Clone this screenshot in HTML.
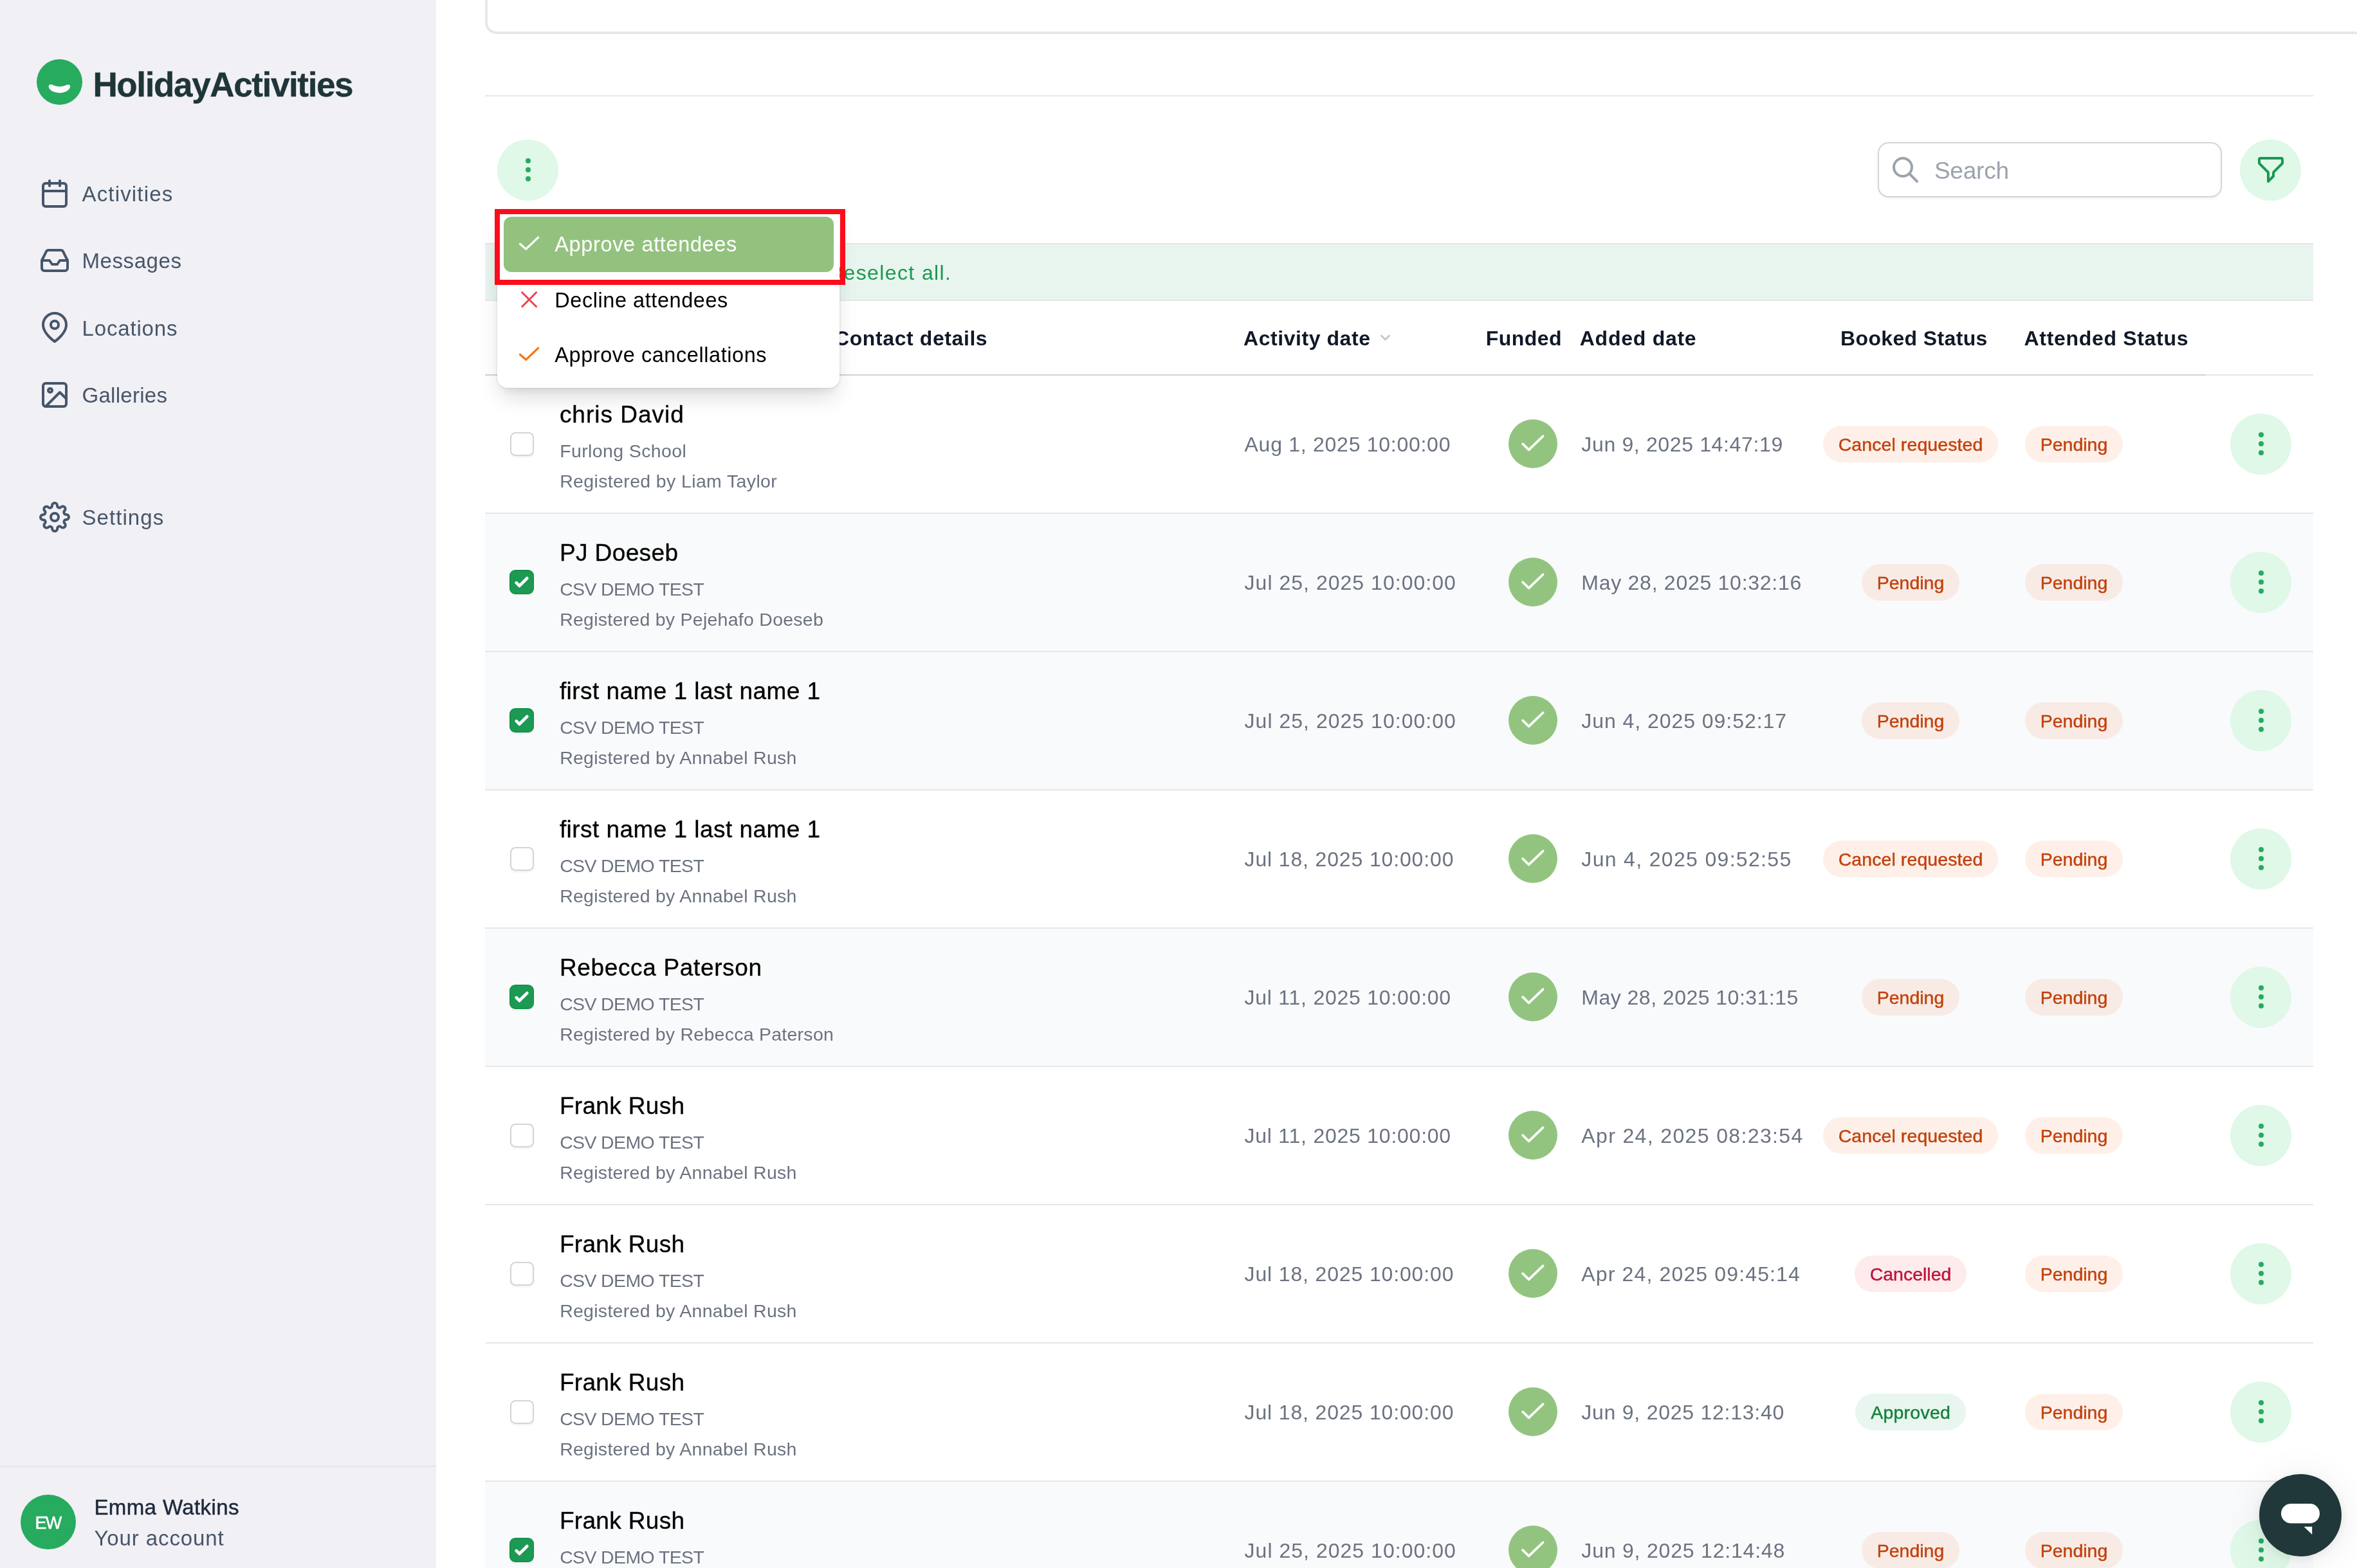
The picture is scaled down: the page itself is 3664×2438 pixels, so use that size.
<!DOCTYPE html>
<html lang="en"><head><meta charset="utf-8"><title>HolidayActivities - Attendees</title>
<style>
html,body{margin:0;padding:0;background:#fff;}
body{width:3664px;height:2438px;position:relative;overflow:hidden;font-family:"Liberation Sans", sans-serif;}
.L{position:absolute;left:0;top:0;width:3664px;height:2438px;overflow:hidden;}
.G{will-change:transform;}
.a{position:absolute;display:block;}
.t{position:absolute;white-space:pre;}
</style></head><body>
<div class="L">
<div class="a" style="left:0px;top:0px;width:678px;height:2438px;background:#f1f0f5;"></div>
<div class="a" style="left:57px;top:92px;width:71px;height:71px;background:#27ab5f;border-radius:36px;"></div>
<svg class="a" style="left:57px;top:92px;" width="71" height="71" viewBox="0 0 71 71" fill="none"><path d="M18.6 42.6 C18.6 39.2 22.4 38.6 25.5 40.2 C31.8 43.4 39.6 43.4 46 40.2 C49 38.6 52.6 39.4 52.2 42.8 C51.4 48.4 44 52.4 35.4 52.4 C26.8 52.4 19.2 48.4 18.6 42.6 Z" fill="#fff"/></svg>
<svg class="a" style="left:60.5px;top:276.5px;" width="48" height="48" viewBox="0 0 24 24" fill="none" stroke="#46566a" stroke-width="2" stroke-linecap="round" stroke-linejoin="round"><rect x="3" y="4" width="18" height="18" rx="2" ry="2"/><line x1="16" y1="2" x2="16" y2="6"/><line x1="8" y1="2" x2="8" y2="6"/><line x1="3" y1="10" x2="21" y2="10"/></svg>
<svg class="a" style="left:60.5px;top:380.79999999999995px;" width="48" height="48" viewBox="0 0 24 24" fill="none" stroke="#46566a" stroke-width="2" stroke-linecap="round" stroke-linejoin="round"><polyline points="22 12 16 12 14 15 10 15 8 12 2 12"/><path d="M5.45 5.11L2 12v6a2 2 0 0 0 2 2h16a2 2 0 0 0 2-2v-6l-3.45-6.89A2 2 0 0 0 16.76 4H7.24a2 2 0 0 0-1.79 1.11z"/></svg>
<svg class="a" style="left:60.5px;top:485.0px;" width="48" height="48" viewBox="0 0 24 24" fill="none" stroke="#46566a" stroke-width="2" stroke-linecap="round" stroke-linejoin="round"><path d="M21 10c0 7-9 13-9 13s-9-6-9-13a9 9 0 0 1 18 0z"/><circle cx="12" cy="10" r="3"/></svg>
<svg class="a" style="left:60.5px;top:589.8px;" width="48" height="48" viewBox="0 0 24 24" fill="none" stroke="#46566a" stroke-width="2" stroke-linecap="round" stroke-linejoin="round"><rect x="3" y="3" width="18" height="18" rx="2" ry="2"/><circle cx="8.5" cy="8.5" r="1.5"/><polyline points="21 15 16 10 5 21"/></svg>
<svg class="a" style="left:60.5px;top:780.0999999999999px;" width="48" height="48" viewBox="0 0 24 24" fill="none" stroke="#46566a" stroke-width="2" stroke-linecap="round" stroke-linejoin="round"><circle cx="12" cy="12" r="3"/><path d="M19.4 15a1.65 1.65 0 0 0 .33 1.82l.06.06a2 2 0 0 1 0 2.83 2 2 0 0 1-2.83 0l-.06-.06a1.65 1.65 0 0 0-1.82-.33 1.65 1.65 0 0 0-1 1.51V21a2 2 0 0 1-2 2 2 2 0 0 1-2-2v-.09A1.65 1.65 0 0 0 9 19.4a1.65 1.65 0 0 0-1.82.33l-.06.06a2 2 0 0 1-2.83 0 2 2 0 0 1 0-2.83l.06-.06a1.65 1.65 0 0 0 .33-1.82 1.65 1.65 0 0 0-1.51-1H3a2 2 0 0 1-2-2 2 2 0 0 1 2-2h.09A1.65 1.65 0 0 0 4.6 9a1.65 1.65 0 0 0-.33-1.82l-.06-.06a2 2 0 0 1 0-2.83 2 2 0 0 1 2.83 0l.06.06a1.65 1.65 0 0 0 1.82.33H9a1.65 1.65 0 0 0 1-1.51V3a2 2 0 0 1 2-2 2 2 0 0 1 2 2v.09a1.65 1.65 0 0 0 1 1.51 1.65 1.65 0 0 0 1.82-.33l.06-.06a2 2 0 0 1 2.83 0 2 2 0 0 1 0 2.83l-.06.06a1.65 1.65 0 0 0-.33 1.82V9a1.65 1.65 0 0 0 1.51 1H21a2 2 0 0 1 2 2 2 2 0 0 1-2 2h-.09a1.65 1.65 0 0 0-1.51 1z"/></svg>
<div class="a" style="left:0px;top:2279px;width:678px;height:2px;background:#e4e5ea;"></div>
<div class="a" style="left:32px;top:2324px;width:86px;height:85px;background:#27ab5f;border-radius:43px;"></div>
<div class="a" style="left:754px;top:-40px;width:3000px;height:93px;border-radius:18px;border:4px solid #e5e7eb;box-sizing:border-box;"></div>
<div class="a" style="left:754px;top:148px;width:2842px;height:2px;background:#e5e7eb;"></div>
<div class="a" style="left:2919px;top:221px;width:535px;height:86px;background:#fff;border-radius:17px;border:2px solid #d1d5db;box-sizing:border-box;box-shadow:0 2px 4px rgba(0,0,0,.05);"></div>
<svg class="a" style="left:2937.7px;top:239.6px;" width="48" height="48" viewBox="0 0 24 24" fill="none" stroke="#9ca3af" stroke-width="2" stroke-linecap="round" stroke-linejoin="round"><path d="M21 21l-6-6m2-5a7 7 0 11-14 0 7 7 0 0114 0z"/></svg>
<div class="a" style="left:3482px;top:217px;width:95px;height:95px;background:#dff8e8;border-radius:48px;"></div>
<svg class="a" style="left:3506px;top:240px;" width="48" height="48" viewBox="0 0 24 24" fill="none" stroke="#1a9850" stroke-width="2" stroke-linecap="round" stroke-linejoin="round"><path d="M3 4a1 1 0 011-1h16a1 1 0 011 1v2.586a1 1 0 01-.293.707l-6.414 6.414a1 1 0 00-.293.707V17l-4 4v-6.586a1 1 0 00-.293-.707L3.293 7.293A1 1 0 013 6.586V4z"/></svg>
<div class="a" style="left:773.0px;top:217.0px;width:95px;height:95px;background:#dff8e8;border-radius:48px;"></div>
<svg class="a" style="left:796.8px;top:239.8px;" width="48" height="48" viewBox="0 0 24 24" fill="#27ab5f"><circle cx="12" cy="5" r="2"/><circle cx="12" cy="12" r="2"/><circle cx="12" cy="19" r="2"/></svg>
<div class="a" style="left:754px;top:378px;width:2842px;height:2px;background:#e5e7eb;"></div>
<div class="a" style="left:754px;top:380px;width:2842px;height:86px;background:#e8f5ee;"></div>
<div class="a" style="left:754px;top:466px;width:2842px;height:2px;background:#e5e7eb;"></div>
<div class="a" style="left:793px;top:506px;width:36px;height:36px;background:#fff;border-radius:8px;border:2px solid #d1d5db;box-sizing:border-box;"></div>
<svg class="a" style="left:2142.9px;top:514px;" width="21" height="21" viewBox="0 0 24 24" fill="none" stroke="#c3c6cc" stroke-width="3.2" stroke-linecap="round" stroke-linejoin="round"><path d="M19 9l-7 7-7-7"/></svg>
<div class="a" style="left:754px;top:582px;width:2675px;height:2px;background:#cdd3da;"></div>
<div class="a" style="left:3429px;top:582px;width:167px;height:2px;background:#e5e7eb;"></div>
<div class="a" style="left:754px;top:797px;width:2842px;height:2px;background:#e5e7eb;"></div>
<div class="a" style="left:792.5px;top:671.5px;width:37px;height:37px;background:#fff;border-radius:8.5px;border:2px solid #d1d5db;box-sizing:border-box;box-shadow:0 2px 3px rgba(0,0,0,.06);"></div>
<div class="a" style="left:2345px;top:652.0px;width:76px;height:76px;background:#93c47f;border-radius:38px;"></div>
<svg class="a" style="left:2345px;top:652.0px;" width="76" height="76" viewBox="0 0 76 76" fill="none" stroke="#fff" stroke-width="3.6" stroke-linecap="round" stroke-linejoin="round"><polyline points="22.1,38.1 31.6,47.4 53.7,26.1"/></svg>
<div class="a" style="left:2834.0px;top:662.0px;width:272px;height:57px;background:rgba(245,105,35,.1);border-radius:28.5px;"></div>
<div class="a" style="left:3148px;top:662.0px;width:152px;height:57px;background:rgba(245,105,35,.1);border-radius:28.5px;"></div>
<div class="a" style="left:3467.0px;top:642.9px;width:95px;height:95px;background:#dff8e8;border-radius:48px;"></div>
<svg class="a" style="left:3490.8px;top:665.6999999999999px;" width="48" height="48" viewBox="0 0 24 24" fill="#27ab5f"><circle cx="12" cy="5" r="2"/><circle cx="12" cy="12" r="2"/><circle cx="12" cy="19" r="2"/></svg>
<div class="a" style="left:754px;top:799px;width:2842px;height:213px;background:#f9fafb;"></div>
<div class="a" style="left:754px;top:1012px;width:2842px;height:2px;background:#e5e7eb;"></div>
<div class="a" style="left:792px;top:886.0px;width:38px;height:38px;background:#1c9a54;border-radius:9px;border:2px solid #15924a;box-sizing:border-box;box-shadow:0 2px 3px rgba(0,0,0,.06);"></div>
<svg class="a" style="left:792px;top:886.0px;" width="38" height="38" viewBox="0 0 16 16" fill="none"><path fill="#fff" d="M12.207 4.793a1 1 0 010 1.414l-5 5a1 1 0 01-1.414 0l-2-2a1 1 0 011.414-1.414L6.5 9.086l4.293-4.293a1 1 0 011.414 0z"/></svg>
<div class="a" style="left:2345px;top:867.0px;width:76px;height:76px;background:#93c47f;border-radius:38px;"></div>
<svg class="a" style="left:2345px;top:867.0px;" width="76" height="76" viewBox="0 0 76 76" fill="none" stroke="#fff" stroke-width="3.6" stroke-linecap="round" stroke-linejoin="round"><polyline points="22.1,38.1 31.6,47.4 53.7,26.1"/></svg>
<div class="a" style="left:2894.0px;top:877.0px;width:152px;height:57px;background:rgba(245,105,35,.1);border-radius:28.5px;"></div>
<div class="a" style="left:3148px;top:877.0px;width:152px;height:57px;background:rgba(245,105,35,.1);border-radius:28.5px;"></div>
<div class="a" style="left:3467.0px;top:857.9px;width:95px;height:95px;background:#dff8e8;border-radius:48px;"></div>
<svg class="a" style="left:3490.8px;top:880.6999999999999px;" width="48" height="48" viewBox="0 0 24 24" fill="#27ab5f"><circle cx="12" cy="5" r="2"/><circle cx="12" cy="12" r="2"/><circle cx="12" cy="19" r="2"/></svg>
<div class="a" style="left:754px;top:1014px;width:2842px;height:213px;background:#f9fafb;"></div>
<div class="a" style="left:754px;top:1227px;width:2842px;height:2px;background:#e5e7eb;"></div>
<div class="a" style="left:792px;top:1101.0px;width:38px;height:38px;background:#1c9a54;border-radius:9px;border:2px solid #15924a;box-sizing:border-box;box-shadow:0 2px 3px rgba(0,0,0,.06);"></div>
<svg class="a" style="left:792px;top:1101.0px;" width="38" height="38" viewBox="0 0 16 16" fill="none"><path fill="#fff" d="M12.207 4.793a1 1 0 010 1.414l-5 5a1 1 0 01-1.414 0l-2-2a1 1 0 011.414-1.414L6.5 9.086l4.293-4.293a1 1 0 011.414 0z"/></svg>
<div class="a" style="left:2345px;top:1082.0px;width:76px;height:76px;background:#93c47f;border-radius:38px;"></div>
<svg class="a" style="left:2345px;top:1082.0px;" width="76" height="76" viewBox="0 0 76 76" fill="none" stroke="#fff" stroke-width="3.6" stroke-linecap="round" stroke-linejoin="round"><polyline points="22.1,38.1 31.6,47.4 53.7,26.1"/></svg>
<div class="a" style="left:2894.0px;top:1092.0px;width:152px;height:57px;background:rgba(245,105,35,.1);border-radius:28.5px;"></div>
<div class="a" style="left:3148px;top:1092.0px;width:152px;height:57px;background:rgba(245,105,35,.1);border-radius:28.5px;"></div>
<div class="a" style="left:3467.0px;top:1072.9px;width:95px;height:95px;background:#dff8e8;border-radius:48px;"></div>
<svg class="a" style="left:3490.8px;top:1095.7px;" width="48" height="48" viewBox="0 0 24 24" fill="#27ab5f"><circle cx="12" cy="5" r="2"/><circle cx="12" cy="12" r="2"/><circle cx="12" cy="19" r="2"/></svg>
<div class="a" style="left:754px;top:1442px;width:2842px;height:2px;background:#e5e7eb;"></div>
<div class="a" style="left:792.5px;top:1316.5px;width:37px;height:37px;background:#fff;border-radius:8.5px;border:2px solid #d1d5db;box-sizing:border-box;box-shadow:0 2px 3px rgba(0,0,0,.06);"></div>
<div class="a" style="left:2345px;top:1297.0px;width:76px;height:76px;background:#93c47f;border-radius:38px;"></div>
<svg class="a" style="left:2345px;top:1297.0px;" width="76" height="76" viewBox="0 0 76 76" fill="none" stroke="#fff" stroke-width="3.6" stroke-linecap="round" stroke-linejoin="round"><polyline points="22.1,38.1 31.6,47.4 53.7,26.1"/></svg>
<div class="a" style="left:2834.0px;top:1307.0px;width:272px;height:57px;background:rgba(245,105,35,.1);border-radius:28.5px;"></div>
<div class="a" style="left:3148px;top:1307.0px;width:152px;height:57px;background:rgba(245,105,35,.1);border-radius:28.5px;"></div>
<div class="a" style="left:3467.0px;top:1287.9px;width:95px;height:95px;background:#dff8e8;border-radius:48px;"></div>
<svg class="a" style="left:3490.8px;top:1310.7px;" width="48" height="48" viewBox="0 0 24 24" fill="#27ab5f"><circle cx="12" cy="5" r="2"/><circle cx="12" cy="12" r="2"/><circle cx="12" cy="19" r="2"/></svg>
<div class="a" style="left:754px;top:1444px;width:2842px;height:213px;background:#f9fafb;"></div>
<div class="a" style="left:754px;top:1657px;width:2842px;height:2px;background:#e5e7eb;"></div>
<div class="a" style="left:792px;top:1531.0px;width:38px;height:38px;background:#1c9a54;border-radius:9px;border:2px solid #15924a;box-sizing:border-box;box-shadow:0 2px 3px rgba(0,0,0,.06);"></div>
<svg class="a" style="left:792px;top:1531.0px;" width="38" height="38" viewBox="0 0 16 16" fill="none"><path fill="#fff" d="M12.207 4.793a1 1 0 010 1.414l-5 5a1 1 0 01-1.414 0l-2-2a1 1 0 011.414-1.414L6.5 9.086l4.293-4.293a1 1 0 011.414 0z"/></svg>
<div class="a" style="left:2345px;top:1512.0px;width:76px;height:76px;background:#93c47f;border-radius:38px;"></div>
<svg class="a" style="left:2345px;top:1512.0px;" width="76" height="76" viewBox="0 0 76 76" fill="none" stroke="#fff" stroke-width="3.6" stroke-linecap="round" stroke-linejoin="round"><polyline points="22.1,38.1 31.6,47.4 53.7,26.1"/></svg>
<div class="a" style="left:2894.0px;top:1522.0px;width:152px;height:57px;background:rgba(245,105,35,.1);border-radius:28.5px;"></div>
<div class="a" style="left:3148px;top:1522.0px;width:152px;height:57px;background:rgba(245,105,35,.1);border-radius:28.5px;"></div>
<div class="a" style="left:3467.0px;top:1502.9px;width:95px;height:95px;background:#dff8e8;border-radius:48px;"></div>
<svg class="a" style="left:3490.8px;top:1525.7px;" width="48" height="48" viewBox="0 0 24 24" fill="#27ab5f"><circle cx="12" cy="5" r="2"/><circle cx="12" cy="12" r="2"/><circle cx="12" cy="19" r="2"/></svg>
<div class="a" style="left:754px;top:1872px;width:2842px;height:2px;background:#e5e7eb;"></div>
<div class="a" style="left:792.5px;top:1746.5px;width:37px;height:37px;background:#fff;border-radius:8.5px;border:2px solid #d1d5db;box-sizing:border-box;box-shadow:0 2px 3px rgba(0,0,0,.06);"></div>
<div class="a" style="left:2345px;top:1727.0px;width:76px;height:76px;background:#93c47f;border-radius:38px;"></div>
<svg class="a" style="left:2345px;top:1727.0px;" width="76" height="76" viewBox="0 0 76 76" fill="none" stroke="#fff" stroke-width="3.6" stroke-linecap="round" stroke-linejoin="round"><polyline points="22.1,38.1 31.6,47.4 53.7,26.1"/></svg>
<div class="a" style="left:2834.0px;top:1737.0px;width:272px;height:57px;background:rgba(245,105,35,.1);border-radius:28.5px;"></div>
<div class="a" style="left:3148px;top:1737.0px;width:152px;height:57px;background:rgba(245,105,35,.1);border-radius:28.5px;"></div>
<div class="a" style="left:3467.0px;top:1717.9px;width:95px;height:95px;background:#dff8e8;border-radius:48px;"></div>
<svg class="a" style="left:3490.8px;top:1740.7px;" width="48" height="48" viewBox="0 0 24 24" fill="#27ab5f"><circle cx="12" cy="5" r="2"/><circle cx="12" cy="12" r="2"/><circle cx="12" cy="19" r="2"/></svg>
<div class="a" style="left:754px;top:2087px;width:2842px;height:2px;background:#e5e7eb;"></div>
<div class="a" style="left:792.5px;top:1961.5px;width:37px;height:37px;background:#fff;border-radius:8.5px;border:2px solid #d1d5db;box-sizing:border-box;box-shadow:0 2px 3px rgba(0,0,0,.06);"></div>
<div class="a" style="left:2345px;top:1942.0px;width:76px;height:76px;background:#93c47f;border-radius:38px;"></div>
<svg class="a" style="left:2345px;top:1942.0px;" width="76" height="76" viewBox="0 0 76 76" fill="none" stroke="#fff" stroke-width="3.6" stroke-linecap="round" stroke-linejoin="round"><polyline points="22.1,38.1 31.6,47.4 53.7,26.1"/></svg>
<div class="a" style="left:2883.0px;top:1952.0px;width:174px;height:57px;background:rgba(245,55,65,.1);border-radius:28.5px;"></div>
<div class="a" style="left:3148px;top:1952.0px;width:152px;height:57px;background:rgba(245,105,35,.1);border-radius:28.5px;"></div>
<div class="a" style="left:3467.0px;top:1932.9px;width:95px;height:95px;background:#dff8e8;border-radius:48px;"></div>
<svg class="a" style="left:3490.8px;top:1955.7px;" width="48" height="48" viewBox="0 0 24 24" fill="#27ab5f"><circle cx="12" cy="5" r="2"/><circle cx="12" cy="12" r="2"/><circle cx="12" cy="19" r="2"/></svg>
<div class="a" style="left:754px;top:2302px;width:2842px;height:2px;background:#e5e7eb;"></div>
<div class="a" style="left:792.5px;top:2176.5px;width:37px;height:37px;background:#fff;border-radius:8.5px;border:2px solid #d1d5db;box-sizing:border-box;box-shadow:0 2px 3px rgba(0,0,0,.06);"></div>
<div class="a" style="left:2345px;top:2157.0px;width:76px;height:76px;background:#93c47f;border-radius:38px;"></div>
<svg class="a" style="left:2345px;top:2157.0px;" width="76" height="76" viewBox="0 0 76 76" fill="none" stroke="#fff" stroke-width="3.6" stroke-linecap="round" stroke-linejoin="round"><polyline points="22.1,38.1 31.6,47.4 53.7,26.1"/></svg>
<div class="a" style="left:2884.0px;top:2167.0px;width:172px;height:57px;background:rgba(25,165,95,.1);border-radius:28.5px;"></div>
<div class="a" style="left:3148px;top:2167.0px;width:152px;height:57px;background:rgba(245,105,35,.1);border-radius:28.5px;"></div>
<div class="a" style="left:3467.0px;top:2147.9px;width:95px;height:95px;background:#dff8e8;border-radius:48px;"></div>
<svg class="a" style="left:3490.8px;top:2170.7000000000003px;" width="48" height="48" viewBox="0 0 24 24" fill="#27ab5f"><circle cx="12" cy="5" r="2"/><circle cx="12" cy="12" r="2"/><circle cx="12" cy="19" r="2"/></svg>
<div class="a" style="left:754px;top:2304px;width:2842px;height:213px;background:#f9fafb;"></div>
<div class="a" style="left:754px;top:2517px;width:2842px;height:2px;background:#e5e7eb;"></div>
<div class="a" style="left:792px;top:2391.0px;width:38px;height:38px;background:#1c9a54;border-radius:9px;border:2px solid #15924a;box-sizing:border-box;box-shadow:0 2px 3px rgba(0,0,0,.06);"></div>
<svg class="a" style="left:792px;top:2391.0px;" width="38" height="38" viewBox="0 0 16 16" fill="none"><path fill="#fff" d="M12.207 4.793a1 1 0 010 1.414l-5 5a1 1 0 01-1.414 0l-2-2a1 1 0 011.414-1.414L6.5 9.086l4.293-4.293a1 1 0 011.414 0z"/></svg>
<div class="a" style="left:2345px;top:2372.0px;width:76px;height:76px;background:#93c47f;border-radius:38px;"></div>
<svg class="a" style="left:2345px;top:2372.0px;" width="76" height="76" viewBox="0 0 76 76" fill="none" stroke="#fff" stroke-width="3.6" stroke-linecap="round" stroke-linejoin="round"><polyline points="22.1,38.1 31.6,47.4 53.7,26.1"/></svg>
<div class="a" style="left:2894.0px;top:2382.0px;width:152px;height:57px;background:rgba(245,105,35,.1);border-radius:28.5px;"></div>
<div class="a" style="left:3148px;top:2382.0px;width:152px;height:57px;background:rgba(245,105,35,.1);border-radius:28.5px;"></div>
<div class="a" style="left:3467.0px;top:2362.9px;width:95px;height:95px;background:#dff8e8;border-radius:48px;"></div>
<svg class="a" style="left:3490.8px;top:2385.7000000000003px;" width="48" height="48" viewBox="0 0 24 24" fill="#27ab5f"><circle cx="12" cy="5" r="2"/><circle cx="12" cy="12" r="2"/><circle cx="12" cy="19" r="2"/></svg>
</div>
<div class="L G">
<div class="t" style="top:98.64px;font-size:53px;line-height:66px;color:#1f3638;font-weight:700;letter-spacing:-1.370px;-webkit-text-stroke:0.4px #1f3638;left:144.41px;">HolidayActivities</div>
<div class="t" style="top:281.17px;font-size:33px;line-height:41px;color:#46566a;letter-spacing:1.164px;left:127.51px;">Activities</div>
<div class="t" style="top:385.47px;font-size:33px;line-height:41px;color:#46566a;letter-spacing:0.582px;left:127.51px;">Messages</div>
<div class="t" style="top:489.67px;font-size:33px;line-height:41px;color:#46566a;letter-spacing:0.839px;left:127.51px;">Locations</div>
<div class="t" style="top:593.67px;font-size:33px;line-height:41px;color:#46566a;letter-spacing:0.283px;left:127.51px;">Galleries</div>
<div class="t" style="top:783.97px;font-size:33px;line-height:41px;color:#46566a;letter-spacing:1.061px;left:127.51px;">Settings</div>
<div class="t" style="top:2350.64px;font-size:27px;line-height:34px;color:#fff;letter-spacing:-1.880px;-webkit-text-stroke:0.5px #fff;left:-325.64px;width:800px;text-align:center;">EW</div>
<div class="t" style="top:2322.77px;font-size:33px;line-height:41px;color:#1e293b;letter-spacing:0.394px;-webkit-text-stroke:0.5px #1e293b;left:146.41px;">Emma Watkins</div>
<div class="t" style="top:2371.07px;font-size:33px;line-height:41px;color:#475569;letter-spacing:0.904px;left:146.41px;">Your account</div>
<div class="t" style="top:243.18px;font-size:37px;line-height:46px;color:#9ca3af;letter-spacing:-0.203px;left:3006.89px;">Search</div>
<div class="t" style="top:403.91px;font-size:32px;line-height:40px;color:#1a9850;letter-spacing:1.420px;left:785.04px;">5 records selected.</div>
<div class="t" style="top:403.91px;font-size:32px;line-height:40px;color:#1a9850;letter-spacing:1.208px;left:1088.04px;">Select all 25.</div>
<div class="t" style="top:403.91px;font-size:32px;line-height:40px;color:#1a9850;letter-spacing:1.385px;left:1287.04px;">Deselect all.</div>
<div class="t" style="top:505.91px;font-size:32px;line-height:40px;color:#111827;font-weight:700;left:870.04px;">Name</div>
<div class="t" style="top:505.91px;font-size:32px;line-height:40px;color:#111827;font-weight:700;letter-spacing:0.589px;left:1297.04px;">Contact details</div>
<div class="t" style="top:505.91px;font-size:32px;line-height:40px;color:#111827;font-weight:700;letter-spacing:0.553px;left:1933.04px;">Activity date</div>
<div class="t" style="top:505.91px;font-size:32px;line-height:40px;color:#111827;font-weight:700;letter-spacing:0.478px;left:2309.74px;">Funded</div>
<div class="t" style="top:505.91px;font-size:32px;line-height:40px;color:#111827;font-weight:700;letter-spacing:0.743px;left:2455.74px;">Added date</div>
<div class="t" style="top:505.91px;font-size:32px;line-height:40px;color:#111827;font-weight:700;letter-spacing:0.357px;left:2861.04px;">Booked Status</div>
<div class="t" style="top:505.91px;font-size:32px;line-height:40px;color:#111827;font-weight:700;letter-spacing:0.684px;left:3146.54px;">Attended Status</div>
<div class="t" style="top:621.68px;font-size:37px;line-height:46px;color:#030303;letter-spacing:0.992px;-webkit-text-stroke:0.35px #030303;left:869.89px;">chris David</div>
<div class="t" style="top:683.12px;font-size:28.5px;line-height:36px;color:#6b7280;letter-spacing:0.385px;left:870.14px;">Furlong School</div>
<div class="t" style="top:729.72px;font-size:28.5px;line-height:36px;color:#6b7280;letter-spacing:0.364px;left:870.14px;">Registered by Liam Taylor</div>
<div class="t" style="top:670.91px;font-size:32px;line-height:40px;color:#6b7280;letter-spacing:0.730px;left:1934.54px;">Aug 1, 2025 10:00:00</div>
<div class="t" style="top:670.91px;font-size:32px;line-height:40px;color:#6b7280;letter-spacing:0.643px;left:2458.34px;">Jun 9, 2025 14:47:19</div>
<div class="t" style="top:672.82px;font-size:28.5px;line-height:36px;color:#c2410c;letter-spacing:0.087px;-webkit-text-stroke:0.45px #c2410c;left:2570.04px;width:800px;text-align:center;">Cancel requested</div>
<div class="t" style="top:672.82px;font-size:28.5px;line-height:36px;color:#c2410c;letter-spacing:0.019px;-webkit-text-stroke:0.45px #c2410c;left:2824.01px;width:800px;text-align:center;">Pending</div>
<div class="t" style="top:836.68px;font-size:37px;line-height:46px;color:#030303;letter-spacing:0.402px;-webkit-text-stroke:0.35px #030303;left:869.89px;">PJ Doeseb</div>
<div class="t" style="top:898.12px;font-size:28.5px;line-height:36px;color:#6b7280;letter-spacing:-0.630px;left:870.14px;">CSV DEMO TEST</div>
<div class="t" style="top:944.72px;font-size:28.5px;line-height:36px;color:#6b7280;letter-spacing:0.260px;left:870.14px;">Registered by Pejehafo Doeseb</div>
<div class="t" style="top:885.91px;font-size:32px;line-height:40px;color:#6b7280;letter-spacing:1.025px;left:1934.54px;">Jul 25, 2025 10:00:00</div>
<div class="t" style="top:885.91px;font-size:32px;line-height:40px;color:#6b7280;letter-spacing:0.728px;left:2458.34px;">May 28, 2025 10:32:16</div>
<div class="t" style="top:887.82px;font-size:28.5px;line-height:36px;color:#c2410c;letter-spacing:0.019px;-webkit-text-stroke:0.45px #c2410c;left:2570.01px;width:800px;text-align:center;">Pending</div>
<div class="t" style="top:887.82px;font-size:28.5px;line-height:36px;color:#c2410c;letter-spacing:0.019px;-webkit-text-stroke:0.45px #c2410c;left:2824.01px;width:800px;text-align:center;">Pending</div>
<div class="t" style="top:1051.68px;font-size:37px;line-height:46px;color:#030303;letter-spacing:0.451px;-webkit-text-stroke:0.35px #030303;left:869.89px;">first name 1 last name 1</div>
<div class="t" style="top:1113.12px;font-size:28.5px;line-height:36px;color:#6b7280;letter-spacing:-0.630px;left:870.14px;">CSV DEMO TEST</div>
<div class="t" style="top:1159.72px;font-size:28.5px;line-height:36px;color:#6b7280;letter-spacing:0.283px;left:870.14px;">Registered by Annabel Rush</div>
<div class="t" style="top:1100.91px;font-size:32px;line-height:40px;color:#6b7280;letter-spacing:1.025px;left:1934.54px;">Jul 25, 2025 10:00:00</div>
<div class="t" style="top:1100.91px;font-size:32px;line-height:40px;color:#6b7280;letter-spacing:0.948px;left:2458.34px;">Jun 4, 2025 09:52:17</div>
<div class="t" style="top:1102.82px;font-size:28.5px;line-height:36px;color:#c2410c;letter-spacing:0.019px;-webkit-text-stroke:0.45px #c2410c;left:2570.01px;width:800px;text-align:center;">Pending</div>
<div class="t" style="top:1102.82px;font-size:28.5px;line-height:36px;color:#c2410c;letter-spacing:0.019px;-webkit-text-stroke:0.45px #c2410c;left:2824.01px;width:800px;text-align:center;">Pending</div>
<div class="t" style="top:1266.68px;font-size:37px;line-height:46px;color:#030303;letter-spacing:0.451px;-webkit-text-stroke:0.35px #030303;left:869.89px;">first name 1 last name 1</div>
<div class="t" style="top:1328.12px;font-size:28.5px;line-height:36px;color:#6b7280;letter-spacing:-0.630px;left:870.14px;">CSV DEMO TEST</div>
<div class="t" style="top:1374.72px;font-size:28.5px;line-height:36px;color:#6b7280;letter-spacing:0.283px;left:870.14px;">Registered by Annabel Rush</div>
<div class="t" style="top:1315.91px;font-size:32px;line-height:40px;color:#6b7280;letter-spacing:0.855px;left:1934.54px;">Jul 18, 2025 10:00:00</div>
<div class="t" style="top:1315.91px;font-size:32px;line-height:40px;color:#6b7280;letter-spacing:1.327px;left:2458.34px;">Jun 4, 2025 09:52:55</div>
<div class="t" style="top:1317.82px;font-size:28.5px;line-height:36px;color:#c2410c;letter-spacing:0.087px;-webkit-text-stroke:0.45px #c2410c;left:2570.04px;width:800px;text-align:center;">Cancel requested</div>
<div class="t" style="top:1317.82px;font-size:28.5px;line-height:36px;color:#c2410c;letter-spacing:0.019px;-webkit-text-stroke:0.45px #c2410c;left:2824.01px;width:800px;text-align:center;">Pending</div>
<div class="t" style="top:1481.68px;font-size:37px;line-height:46px;color:#030303;letter-spacing:0.654px;-webkit-text-stroke:0.35px #030303;left:869.89px;">Rebecca Paterson</div>
<div class="t" style="top:1543.12px;font-size:28.5px;line-height:36px;color:#6b7280;letter-spacing:-0.630px;left:870.14px;">CSV DEMO TEST</div>
<div class="t" style="top:1589.72px;font-size:28.5px;line-height:36px;color:#6b7280;letter-spacing:0.258px;left:870.14px;">Registered by Rebecca Paterson</div>
<div class="t" style="top:1530.91px;font-size:32px;line-height:40px;color:#6b7280;letter-spacing:0.759px;left:1934.54px;">Jul 11, 2025 10:00:00</div>
<div class="t" style="top:1530.91px;font-size:32px;line-height:40px;color:#6b7280;letter-spacing:0.478px;left:2458.34px;">May 28, 2025 10:31:15</div>
<div class="t" style="top:1532.82px;font-size:28.5px;line-height:36px;color:#c2410c;letter-spacing:0.019px;-webkit-text-stroke:0.45px #c2410c;left:2570.01px;width:800px;text-align:center;">Pending</div>
<div class="t" style="top:1532.82px;font-size:28.5px;line-height:36px;color:#c2410c;letter-spacing:0.019px;-webkit-text-stroke:0.45px #c2410c;left:2824.01px;width:800px;text-align:center;">Pending</div>
<div class="t" style="top:1696.68px;font-size:37px;line-height:46px;color:#030303;letter-spacing:0.332px;-webkit-text-stroke:0.35px #030303;left:869.89px;">Frank Rush</div>
<div class="t" style="top:1758.12px;font-size:28.5px;line-height:36px;color:#6b7280;letter-spacing:-0.630px;left:870.14px;">CSV DEMO TEST</div>
<div class="t" style="top:1804.72px;font-size:28.5px;line-height:36px;color:#6b7280;letter-spacing:0.283px;left:870.14px;">Registered by Annabel Rush</div>
<div class="t" style="top:1745.91px;font-size:32px;line-height:40px;color:#6b7280;letter-spacing:0.759px;left:1934.54px;">Jul 11, 2025 10:00:00</div>
<div class="t" style="top:1745.91px;font-size:32px;line-height:40px;color:#6b7280;letter-spacing:1.361px;left:2458.34px;">Apr 24, 2025 08:23:54</div>
<div class="t" style="top:1747.82px;font-size:28.5px;line-height:36px;color:#c2410c;letter-spacing:0.087px;-webkit-text-stroke:0.45px #c2410c;left:2570.04px;width:800px;text-align:center;">Cancel requested</div>
<div class="t" style="top:1747.82px;font-size:28.5px;line-height:36px;color:#c2410c;letter-spacing:0.019px;-webkit-text-stroke:0.45px #c2410c;left:2824.01px;width:800px;text-align:center;">Pending</div>
<div class="t" style="top:1911.68px;font-size:37px;line-height:46px;color:#030303;letter-spacing:0.332px;-webkit-text-stroke:0.35px #030303;left:869.89px;">Frank Rush</div>
<div class="t" style="top:1973.12px;font-size:28.5px;line-height:36px;color:#6b7280;letter-spacing:-0.630px;left:870.14px;">CSV DEMO TEST</div>
<div class="t" style="top:2019.72px;font-size:28.5px;line-height:36px;color:#6b7280;letter-spacing:0.283px;left:870.14px;">Registered by Annabel Rush</div>
<div class="t" style="top:1960.91px;font-size:32px;line-height:40px;color:#6b7280;letter-spacing:0.855px;left:1934.54px;">Jul 18, 2025 10:00:00</div>
<div class="t" style="top:1960.91px;font-size:32px;line-height:40px;color:#6b7280;letter-spacing:1.141px;left:2458.34px;">Apr 24, 2025 09:45:14</div>
<div class="t" style="top:1962.82px;font-size:28.5px;line-height:36px;color:#be123c;letter-spacing:-0.005px;-webkit-text-stroke:0.45px #be123c;left:2570.00px;width:800px;text-align:center;">Cancelled</div>
<div class="t" style="top:1962.82px;font-size:28.5px;line-height:36px;color:#c2410c;letter-spacing:0.019px;-webkit-text-stroke:0.45px #c2410c;left:2824.01px;width:800px;text-align:center;">Pending</div>
<div class="t" style="top:2126.68px;font-size:37px;line-height:46px;color:#030303;letter-spacing:0.332px;-webkit-text-stroke:0.35px #030303;left:869.89px;">Frank Rush</div>
<div class="t" style="top:2188.12px;font-size:28.5px;line-height:36px;color:#6b7280;letter-spacing:-0.630px;left:870.14px;">CSV DEMO TEST</div>
<div class="t" style="top:2234.72px;font-size:28.5px;line-height:36px;color:#6b7280;letter-spacing:0.283px;left:870.14px;">Registered by Annabel Rush</div>
<div class="t" style="top:2175.91px;font-size:32px;line-height:40px;color:#6b7280;letter-spacing:0.855px;left:1934.54px;">Jul 18, 2025 10:00:00</div>
<div class="t" style="top:2175.91px;font-size:32px;line-height:40px;color:#6b7280;letter-spacing:0.748px;left:2458.34px;">Jun 9, 2025 12:13:40</div>
<div class="t" style="top:2177.82px;font-size:28.5px;line-height:36px;color:#15803d;letter-spacing:0.242px;-webkit-text-stroke:0.45px #15803d;left:2570.12px;width:800px;text-align:center;">Approved</div>
<div class="t" style="top:2177.82px;font-size:28.5px;line-height:36px;color:#c2410c;letter-spacing:0.019px;-webkit-text-stroke:0.45px #c2410c;left:2824.01px;width:800px;text-align:center;">Pending</div>
<div class="t" style="top:2341.68px;font-size:37px;line-height:46px;color:#030303;letter-spacing:0.332px;-webkit-text-stroke:0.35px #030303;left:869.89px;">Frank Rush</div>
<div class="t" style="top:2403.12px;font-size:28.5px;line-height:36px;color:#6b7280;letter-spacing:-0.630px;left:870.14px;">CSV DEMO TEST</div>
<div class="t" style="top:2449.72px;font-size:28.5px;line-height:36px;color:#6b7280;letter-spacing:0.283px;left:870.14px;">Registered by Annabel Rush</div>
<div class="t" style="top:2390.91px;font-size:32px;line-height:40px;color:#6b7280;letter-spacing:1.025px;left:1934.54px;">Jul 25, 2025 10:00:00</div>
<div class="t" style="top:2390.91px;font-size:32px;line-height:40px;color:#6b7280;letter-spacing:0.801px;left:2458.34px;">Jun 9, 2025 12:14:48</div>
<div class="t" style="top:2392.82px;font-size:28.5px;line-height:36px;color:#c2410c;letter-spacing:0.019px;-webkit-text-stroke:0.45px #c2410c;left:2570.01px;width:800px;text-align:center;">Pending</div>
<div class="t" style="top:2392.82px;font-size:28.5px;line-height:36px;color:#c2410c;letter-spacing:0.019px;-webkit-text-stroke:0.45px #c2410c;left:2824.01px;width:800px;text-align:center;">Pending</div>
</div>
<div class="L">
<div class="a" style="left:773px;top:327px;width:532px;height:276px;background:#fff;border-radius:16px;box-shadow:0 0 0 2px rgba(0,0,0,.04),0 20px 34px -6px rgba(0,0,0,.14),0 8px 14px -4px rgba(0,0,0,.07);"></div>
<div class="a" style="left:783px;top:337px;width:513px;height:86px;background:#93c27f;border-radius:12px;"></div>
<svg class="a" style="left:790px;top:345px;" width="80" height="70" viewBox="0 0 80 70" fill="none" stroke="#fff" stroke-width="3.2" stroke-linecap="round" stroke-linejoin="round"><polyline points="18.5,34.2 27.5,42.3 46.7,24.1"/></svg>
<svg class="a" style="left:790px;top:430px;" width="80" height="70" viewBox="0 0 80 70" fill="none" stroke="#f04050" stroke-width="3" stroke-linecap="round" stroke-linejoin="round"><path d="M21.7 24.7L43.6 46.7M43.6 24.7L21.7 46.7"/></svg>
<svg class="a" style="left:790px;top:517px;" width="80" height="70" viewBox="0 0 80 70" fill="none" stroke="#f97316" stroke-width="3.2" stroke-linecap="round" stroke-linejoin="round"><polyline points="18.5,34.2 27.5,42.3 46.7,24.1"/></svg>
</div>
<div class="L G">
<div class="t" style="top:360.24px;font-size:32.5px;line-height:41px;color:#fff;letter-spacing:0.632px;left:862.32px;">Approve attendees</div>
<div class="t" style="top:446.84px;font-size:32.5px;line-height:41px;color:#000;letter-spacing:0.548px;left:862.32px;">Decline attendees</div>
<div class="t" style="top:532.24px;font-size:32.5px;line-height:41px;color:#000;letter-spacing:0.563px;left:862.32px;">Approve cancellations</div>
</div>
<div class="L">
<div class="a" style="left:769px;top:325px;width:545px;height:118px;border:8px solid #fc0d1b;box-sizing:border-box;"></div>
<div class="a" style="left:3512px;top:2292px;width:128px;height:128px;background:#21383a;border-radius:64px;box-shadow:0 3px 16px rgba(0,0,0,.08),0 6px 60px rgba(0,0,0,.08);"></div>
<svg class="a" style="left:3512px;top:2292px;" width="128" height="128" viewBox="0 0 128 128" fill="none"><rect x="34" y="46" width="60" height="30.5" rx="15.25" fill="#fff"/><path d="M69.5 81.8H82.2V94z" fill="#fff"/></svg>
</div>
</body></html>
